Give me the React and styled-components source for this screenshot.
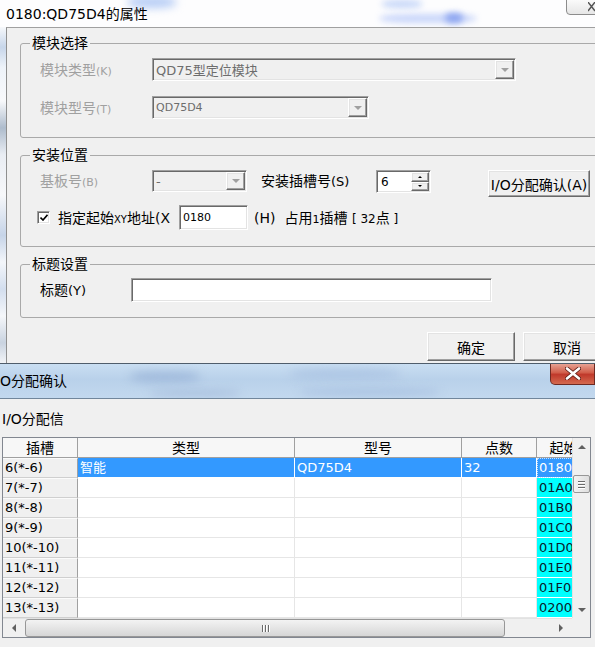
import React from "react"
import styled, { createGlobalStyle, css } from "styled-components"

const GlobalStyle = createGlobalStyle`
  html, body {
    margin: 0;
    padding: 0;
    background: #f0f0f0;
  }
  body {
    width: 595px;
    height: 647px;
    overflow: hidden;
    font-family: "DejaVu Sans", "Noto Sans CJK SC", sans-serif;
    font-size: 14px;
    color: #000;
  }
`

const sunken = css`
  box-sizing: border-box;
  border: 1px solid;
  border-color: #a0a0a0 #ffffff #ffffff #a0a0a0;
  box-shadow: inset 1px 1px 0 #696969, inset -1px -1px 0 #e3e3e3;
`

const raised = css`
  box-sizing: border-box;
  border: 1px solid;
  border-color: #ffffff #696969 #696969 #ffffff;
  box-shadow: inset -1px -1px 0 #a0a0a0, inset 1px 1px 0 #e3e3e3;
  background: #f0f0f0;
`

const Page = styled.div`
  width: 595px;
  height: 647px;
  display: flex;
  flex-direction: column;
  overflow: hidden;
`

/* ---------- properties window ---------- */

const TopWindow = styled.div`
  height: 363px;
  flex: none;
  display: flex;
  flex-direction: column;
  overflow: hidden;
`

const TopTitleBar = styled.div`
  position: relative;
  height: 27px;
  flex: none;
  display: flex;
  align-items: center;
  padding-left: 6px;
  background: #fdfdfe;
  overflow: hidden;
`

const TitleText = styled.span`
  position: relative;
  z-index: 1;
  font-size: 14px;
  line-height: 16px;
  white-space: nowrap;
`

const Blob = styled.span`
  position: absolute;
  left: ${(p) => p.$x}px;
  top: ${(p) => p.$y}px;
  width: ${(p) => p.$w}px;
  height: ${(p) => p.$h}px;
  background: ${(p) => p.$c};
  filter: blur(${(p) => p.$b || 3}px);
  border-radius: 40%;
`

const GhostClose = styled.div`
  position: absolute;
  top: -1px;
  right: -8px;
  width: 37px;
  height: 16px;
  border: 1px solid #8c8c8c;
  border-radius: 0 0 4px 4px;
  background: linear-gradient(180deg, #fafafa, #e6e6e6);
  display: flex;
  align-items: center;
  justify-content: flex-end;
  padding-right: 6px;
  box-sizing: border-box;
`

const Frame = styled.div`
  flex: 1;
  display: flex;
  min-height: 0;
`

const DesktopEdge = styled.div`
  width: 6px;
  flex: none;
  background: linear-gradient(
    180deg,
    #f6f8fb 0%,
    #c7d6ea 6%,
    #eef3f9 12%,
    #f8f9fb 22%,
    #aebccd 30%,
    #e9edf3 38%,
    #f7f8fa 50%,
    #c6d4e8 62%,
    #f3f6fa 70%,
    #d3deee 78%,
    #f5f7fa 86%,
    #c9d3e0 94%,
    #f2f4f7 100%
  );
`

const DialogBody = styled.div`
  flex: 1;
  min-width: 0;
  display: flex;
  flex-direction: column;
  background: #f0f0f0;
  border-left: 1px solid #8f8f8f;
  border-top: 1px solid #a0a0a0;
  padding-left: 13px;
  overflow: hidden;
`

const Group = styled.div`
  position: relative;
  flex: none;
  margin: ${(p) => p.$top}px -30px 0 0;
  border: 1px solid #a9a9a9;
  border-radius: 3px;
  padding: ${(p) => p.$pad};
  display: flex;
  flex-direction: column;
  gap: ${(p) => p.$gap || 0}px;
`

const GroupTitle = styled.span`
  position: absolute;
  top: -9px;
  left: 9px;
  padding: 0 2px;
  background: #f0f0f0;
  font-size: 14px;
  line-height: 16px;
`

const Row = styled.div`
  display: flex;
  align-items: ${(p) => p.$align || "center"};
`

const FieldLabel = styled.span`
  flex: none;
  width: ${(p) => (p.$w ? `${p.$w}px` : "auto")};
  margin-left: ${(p) => p.$ml || 0}px;
  margin-right: ${(p) => p.$mr || 0}px;
  height: ${(p) => p.$h || 16}px;
  line-height: ${(p) => p.$h || 16}px;
  color: ${(p) => (p.$disabled ? "#a0a0a0" : "#000")};
  font-size: 14px;
  white-space: nowrap;
`

const Small = styled.span`
  font-size: ${(p) => p.$size || 11}px;
`

const ComboBox = styled.div`
  ${sunken};
  width: ${(p) => p.$w}px;
  height: ${(p) => p.$h}px;
  flex: none;
  display: flex;
  align-items: stretch;
  background: #f0f0f0;
  padding: 1px;
`

const ComboText = styled.span`
  flex: 1;
  display: flex;
  align-items: center;
  padding-left: 2px;
  color: #6d6d6d;
  font-size: ${(p) => p.$size || 13}px;
  white-space: nowrap;
  overflow: hidden;
`

const DropButton = styled.span`
  ${raised};
  width: 19px;
  flex: none;
  display: flex;
  align-items: center;
  justify-content: center;
`

const SpinBox = styled.div`
  ${sunken};
  width: 55px;
  height: 23px;
  flex: none;
  margin-right: 57px;
  display: flex;
  background: #fff;
  padding: 1px;
`

const SpinValue = styled.span`
  flex: 1;
  display: flex;
  align-items: center;
  padding-left: 3px;
  font-size: 12px;
`

const SpinButtons = styled.span`
  width: 18px;
  display: flex;
  flex-direction: column;
`

const SpinButton = styled.span`
  ${raised};
  flex: 1;
  display: flex;
  align-items: center;
  justify-content: center;
`

const PushButton = styled.button`
  ${raised};
  width: ${(p) => p.$w}px;
  height: ${(p) => p.$h}px;
  flex: none;
  padding: 0;
  font-family: inherit;
  font-size: 14px;
  color: #000;
  white-space: nowrap;
  display: flex;
  align-items: center;
  justify-content: center;
`

const CheckBox = styled.span`
  ${sunken};
  width: 13px;
  height: 13px;
  flex: none;
  margin: 0 8px 0 -3px;
  background: #fff;
  display: flex;
  align-items: center;
  justify-content: center;
`

const TextField = styled.div`
  ${sunken};
  width: ${(p) => p.$w}px;
  height: ${(p) => p.$h}px;
  flex: none;
  margin-right: ${(p) => p.$mr || 0}px;
  background: #fff;
  display: flex;
  align-items: center;
  padding-left: 3px;
  font-size: 11px;
`

const ButtonRow = styled.div`
  flex: none;
  display: flex;
  gap: 8px;
  margin-top: 14px;
  padding-left: 407px;
`

/* ---------- I/O window ---------- */

const BottomWindow = styled.div`
  flex: 1;
  min-height: 0;
  display: flex;
  flex-direction: column;
  border-top: 1px solid #4f5d6b;
  background: #f0f0f0;
`

const IoTitleBar = styled.div`
  position: relative;
  height: 34px;
  flex: none;
  display: flex;
  align-items: center;
  background: linear-gradient(180deg, #c9def2 0%, #b9d1ea 45%, #c2d8ee 100%);
  border-bottom: 1px solid #71869b;
  overflow: hidden;
`

const RedClose = styled.div`
  position: absolute;
  top: -1px;
  right: 0;
  width: 45px;
  height: 22px;
  box-sizing: border-box;
  border: 1px solid #6e2a22;
  border-top: none;
  border-radius: 0 0 0 5px;
  background: linear-gradient(180deg, #e9a99b 0%, #d2604c 45%, #c0392b 55%, #d46a4f 100%);
  display: flex;
  align-items: center;
  justify-content: center;
  z-index: 1;
`

const IoBody = styled.div`
  flex: 1;
  display: flex;
  flex-direction: column;
  padding-left: 2px;
`

const Caption = styled.div`
  height: 38px;
  box-sizing: border-box;
  padding-top: 12px;
  font-size: 14px;
  line-height: 16px;
`

const Table = styled.div`
  width: 589px;
  box-sizing: border-box;
  border: 1px solid #828790;
  display: grid;
  grid-template-columns: 1fr 18px;
  grid-template-rows: 180px 19px;
  background: #fff;
`

const GridArea = styled.div`
  overflow: hidden;
  display: grid;
  grid-template-columns: 75px 217px 167px 75px 100px;
  grid-auto-rows: 20px;
  align-content: start;
`

const Cell = styled.div`
  box-sizing: border-box;
  display: flex;
  align-items: center;
  white-space: nowrap;
  overflow: hidden;
  padding-left: 2px;
  font-size: 13px;
  line-height: 16px;
  border-right: 1px solid #e6e6e6;
  border-bottom: 1px solid #e6e6e6;
  background: #fff;
  color: #000;
`

const HeadCell = styled(Cell)`
  justify-content: center;
  padding-left: 0;
  background: #f7f7f7;
  border-right-color: #a0a0a0;
  border-bottom-color: #a0a0a0;
  font-size: 14px;
`

const SlotCell = styled(Cell)`
  background: #f0f0f0;
  border-right-color: #a0a0a0;
  border-bottom-color: #cfcfcf;
  border-top: 1px solid #fbfbfb;
`

const DataCell = styled(Cell)`
  background: ${(p) => (p.$sel ? "#3399ff" : "#fff")};
  color: ${(p) => (p.$sel ? "#fff" : "#000")};
  border-right-color: ${(p) => (p.$sel ? "#ffffff" : "#e6e6e6")};
  border-bottom-color: ${(p) => (p.$sel ? "#ffffff" : "#e6e6e6")};
`

const StartCell = styled(Cell)`
  background: ${(p) => (p.$sel ? "#3399ff" : "#00ffff")};
  color: ${(p) => (p.$sel ? "#fff" : "#0b1a2a")};
  border-bottom-color: #ffffff;
  ${(p) => p.$sel && "outline: 1px dotted #c8e0ff; outline-offset: -1px;"}
`

const VScroll = styled.div`
  display: flex;
  flex-direction: column;
  background: #f0f0f0;
  border-left: 1px solid #e2e2e2;
`

const ScrollArrow = styled.span`
  height: ${(p) => p.$h || 17}px;
  width: ${(p) => p.$w || "auto"};
  flex: none;
  display: flex;
  align-items: center;
  justify-content: center;
`

const VTrack = styled.div`
  flex: 1;
  display: flex;
  flex-direction: column;
`

const VThumb = styled.span`
  height: 18px;
  margin: ${(p) => p.$offset}px 0 0 0;
  box-sizing: border-box;
  border: 1px solid #979797;
  border-radius: 2px;
  background: linear-gradient(90deg, #f3f3f3, #dedede);
  display: flex;
  flex-direction: column;
  align-items: center;
  justify-content: center;
  gap: 2px;
`

const Grip = styled.span`
  display: block;
  width: ${(p) => (p.$v ? 1 : 7)}px;
  height: ${(p) => (p.$v ? 7 : 1)}px;
  background: #6a6a6a;
  box-shadow: ${(p) => (p.$v ? "1px 0 0 #fff" : "0 1px 0 #fff")};
`

const HScroll = styled.div`
  display: flex;
  align-items: stretch;
  background: #f0f0f0;
  border-top: 1px solid #e2e2e2;
`

const HThumb = styled.span`
  width: ${(p) => p.$w}px;
  flex: none;
  box-sizing: border-box;
  border: 1px solid #979797;
  border-radius: 3px;
  background: linear-gradient(180deg, #f3f3f3, #d6d6d6);
  display: flex;
  align-items: center;
  justify-content: center;
  gap: 2px;
`

const HTrack = styled.span`
  flex: 1;
`

const Corner = styled.div`
  background: #f0f0f0;
`

const Tri = ({ dir = "down", color = "#a0a0a0", size = 4 }) => {
  const s = size
  const paths = {
    down: `M0 0H${s * 2}L${s} ${s}Z`,
    up: `M0 ${s}H${s * 2}L${s} 0Z`,
    left: `M${s} 0V${s * 2}L0 ${s}Z`,
    right: `M0 0V${s * 2}L${s} ${s}Z`,
  }
  const vertical = dir === "down" || dir === "up"
  return (
    <svg width={vertical ? s * 2 : s} height={vertical ? s : s * 2} viewBox={`0 0 ${vertical ? s * 2 : s} ${vertical ? s : s * 2}`}>
      <path d={paths[dir]} fill={color} />
    </svg>
  )
}

const rows = [
  { slot: "6(*-6)", type: "智能", model: "QD75D4", points: "32", start: "0180", sel: true },
  { slot: "7(*-7)", start: "01A0" },
  { slot: "8(*-8)", start: "01B0" },
  { slot: "9(*-9)", start: "01C0" },
  { slot: "10(*-10)", start: "01D0" },
  { slot: "11(*-11)", start: "01E0" },
  { slot: "12(*-12)", start: "01F0" },
  { slot: "13(*-13)", start: "0200" },
]

const App = () => {
  return (
    <Page>
      <GlobalStyle />
      <TopWindow>
        <TopTitleBar>
          <Blob $x={128} $y={-4} $w={48} $h={12} $c="#b7cdf5" $b={4} />
          <Blob $x={382} $y={0} $w={40} $h={8} $c="#c7d7f8" $b={3} />
          <Blob $x={380} $y={14} $w={96} $h={9} $c="#c9d6fa" $b={3} />
          <Blob $x={445} $y={13} $w={18} $h={10} $c="#8ea6f0" $b={3} />
          <TitleText>0180:QD75D4的属性</TitleText>
          <GhostClose>
            <svg width="8" height="10" viewBox="0 0 8 10">
              <path d="M0 0L7 9M7 0L0 9" stroke="#555" strokeWidth="1.4" />
            </svg>
          </GhostClose>
        </TopTitleBar>
        <Frame>
          <DesktopEdge />
          <DialogBody>
            <Group $top={15} $pad="14px 0 18px 19px" $gap={15}>
              <GroupTitle>模块选择</GroupTitle>
              <Row>
                <FieldLabel $w={112} $disabled>
                  模块类型<Small>(K)</Small>
                </FieldLabel>
                <ComboBox $w={364} $h={23}>
                  <ComboText>QD75型定位模块</ComboText>
                  <DropButton>
                    <Tri />
                  </DropButton>
                </ComboBox>
              </Row>
              <Row>
                <FieldLabel $w={112} $disabled>
                  模块型号<Small>(T)</Small>
                </FieldLabel>
                <ComboBox $w={217} $h={23}>
                  <ComboText $size={11}>QD75D4</ComboText>
                  <DropButton>
                    <Tri />
                  </DropButton>
                </ComboBox>
              </Row>
            </Group>

            <Group $top={17} $pad="14px 0 16px 19px" $gap={8}>
              <GroupTitle>安装位置</GroupTitle>
              <Row $align="flex-start">
                <FieldLabel $w={112} $h={22} $disabled>
                  基板号<Small>(B)</Small>
                </FieldLabel>
                <ComboBox $w={95} $h={22}>
                  <ComboText>-</ComboText>
                  <DropButton>
                    <Tri />
                  </DropButton>
                </ComboBox>
                <FieldLabel $h={22} $w={115} $ml={14}>
                  安装插槽号<Small $size={13}>(S)</Small>
                </FieldLabel>
                <SpinBox>
                  <SpinValue>6</SpinValue>
                  <SpinButtons>
                    <SpinButton>
                      <Tri dir="up" color="#000" size={2} />
                    </SpinButton>
                    <SpinButton>
                      <Tri dir="down" color="#000" size={2} />
                    </SpinButton>
                  </SpinButtons>
                </SpinBox>
                <PushButton $w={102} $h={27}>
                  I/O分配确认(A)
                </PushButton>
              </Row>
              <Row>
                <CheckBox>
                  <svg width="8" height="7" viewBox="0 0 8 7">
                    <path d="M0.5 3.5L3 6L7.5 0.8" stroke="#000" strokeWidth="1.6" fill="none" />
                  </svg>
                </CheckBox>
                <FieldLabel $w={121}>
                  指定起始<Small $size={10}>XY</Small>地址(X
                </FieldLabel>
                <TextField $w={69} $h={25} $mr={6}>
                  0180
                </TextField>
                <FieldLabel $mr={9}>(H)</FieldLabel>
                <FieldLabel>
                  占用<Small $size={11}>1</Small>插槽 <Small $size={12}>[ 32</Small>点<Small $size={12}> ]</Small>
                </FieldLabel>
              </Row>
            </Group>

            <Group $top={17} $pad="13px 0 15px 19px">
              <GroupTitle>标题设置</GroupTitle>
              <Row>
                <FieldLabel $w={91}>
                  标题<Small $size={13}>(Y)</Small>
                </FieldLabel>
                <TextField $w={361} $h={24} />
              </Row>
            </Group>

            <ButtonRow>
              <PushButton $w={88} $h={29}>
                确定
              </PushButton>
              <PushButton $w={88} $h={29}>
                取消
              </PushButton>
            </ButtonRow>
          </DialogBody>
        </Frame>
      </TopWindow>

      <BottomWindow>
        <IoTitleBar>
          <Blob $x={130} $y={8} $w={70} $h={10} $c="#9fb9db" $b={5} />
          <Blob $x={290} $y={6} $w={110} $h={8} $c="#a9c2e2" $b={5} />
          <Blob $x={150} $y={26} $w={90} $h={6} $c="#a7bedd" $b={4} />
          <Blob $x={300} $y={25} $w={140} $h={6} $c="#a6bfe0" $b={4} />
          <TitleText>O分配确认</TitleText>
          <RedClose>
            <svg width="16" height="13" viewBox="0 0 16 13">
              <path d="M2 1.5L14 11.5M14 1.5L2 11.5" stroke="#5b1a12" strokeWidth="4.2" strokeLinecap="round" />
              <path d="M2 1.5L14 11.5M14 1.5L2 11.5" stroke="#ffffff" strokeWidth="2.6" strokeLinecap="round" />
            </svg>
          </RedClose>
        </IoTitleBar>
        <IoBody>
          <Caption>I/O分配信</Caption>
          <Table>
            <GridArea>
              <HeadCell>插槽</HeadCell>
              <HeadCell>类型</HeadCell>
              <HeadCell>型号</HeadCell>
              <HeadCell>点数</HeadCell>
              <HeadCell>起始XY地址</HeadCell>
              {rows.map((r) => (
                <React.Fragment key={r.slot}>
                  <SlotCell>{r.slot}</SlotCell>
                  <DataCell $sel={r.sel}>{r.type}</DataCell>
                  <DataCell $sel={r.sel}>{r.model}</DataCell>
                  <DataCell $sel={r.sel}>{r.points}</DataCell>
                  <StartCell $sel={r.sel}>{r.start}</StartCell>
                </React.Fragment>
              ))}
            </GridArea>
            <VScroll>
              <ScrollArrow>
                <Tri dir="up" color="#606060" size={4} />
              </ScrollArrow>
              <VTrack>
                <VThumb $offset={20}>
                  <Grip />
                  <Grip />
                  <Grip />
                </VThumb>
              </VTrack>
              <ScrollArrow>
                <Tri dir="down" color="#606060" size={4} />
              </ScrollArrow>
            </VScroll>
            <HScroll>
              <ScrollArrow $h={18} $w="22px">
                <Tri dir="left" color="#606060" size={4} />
              </ScrollArrow>
              <HThumb $w={480}>
                <Grip $v />
                <Grip $v />
                <Grip $v />
              </HThumb>
              <HTrack />
              <ScrollArrow $h={18} $w="22px">
                <Tri dir="right" color="#606060" size={4} />
              </ScrollArrow>
            </HScroll>
            <Corner />
          </Table>
        </IoBody>
      </BottomWindow>
    </Page>
  )
}

export default App
